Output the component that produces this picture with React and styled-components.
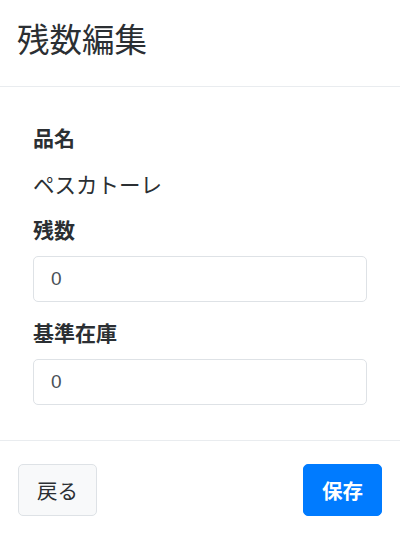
import React from 'react';
import styled, { createGlobalStyle } from 'styled-components';

const colors = {
  text: '#2b2f33',
  muted: '#495057',
  border: '#dee2e6',
  divider: '#e9ecef',
  light: '#f8f9fa',
  primary: '#007bff',
};

const GlobalStyle = createGlobalStyle`
  html, body {
    margin: 0;
    padding: 0;
    background: #fff;
  }
  body {
    font-family: "Noto Sans CJK JP", "Noto Sans", sans-serif;
    color: ${colors.text};
  }
`;

const Modal = styled.div`
  width: 400px;
  height: 536px;
  display: flex;
  flex-direction: column;
  background: #fff;
`;

const Header = styled.div`
  height: 87px;
  box-sizing: border-box;
  padding: 0 17px 12px;
  display: flex;
  align-items: center;
  border-bottom: 1px solid ${colors.divider};
`;

const Title = styled.h5`
  margin: 0;
  font-size: 32.5px;
  font-weight: 400;
  line-height: 1.2;
  color: ${colors.text};
`;

const Body = styled.div`
  padding: 35px 33px 35px;
  border-bottom: 1px solid ${colors.divider};
`;

const Group = styled.div`
  display: flex;
  flex-direction: column;
  margin-bottom: ${(p) => (p.$last ? 0 : '15px')};
`;

const Label = styled.label`
  font-size: 21px;
  font-weight: 700;
  line-height: 30px;
  margin-bottom: 12px;
  color: ${colors.text};
`;

const Value = styled.div`
  font-size: 21.5px;
  line-height: 30px;
  padding-top: 5px;
  color: ${colors.text};
`;

const Input = styled.input`
  box-sizing: border-box;
  height: 46px;
  width: 100%;
  padding: 0 17px;
  border: 1px solid ${colors.border};
  border-radius: 5px;
  font-family: "Liberation Sans", Arial, sans-serif;
  font-size: 19px;
  color: ${colors.muted};
  outline: none;
`;

const Footer = styled.div`
  flex: 1;
  padding: 23px 18px 0;
  display: flex;
  justify-content: space-between;
  align-items: flex-start;
`;

const Button = styled.button`
  width: 79px;
  height: 52px;
  border-radius: 5px;
  font-family: "Noto Sans CJK JP", sans-serif;
  font-size: 20.5px;
  cursor: pointer;
  border: 1px solid ${(p) => (p.$primary ? colors.primary : colors.border)};
  background: ${(p) => (p.$primary ? colors.primary : colors.light)};
  color: ${(p) => (p.$primary ? '#fff' : colors.text)};
  font-weight: ${(p) => (p.$primary ? 700 : 400)};
`;

export default function App() {
  return (
    <>
      <GlobalStyle />
      <Modal>
        <Header>
          <Title>残数編集</Title>
        </Header>
        <Body>
          <Group>
            <Label>品名</Label>
            <Value>ペスカトーレ</Value>
          </Group>
          <Group>
            <Label>残数</Label>
            <Input defaultValue="0" />
          </Group>
          <Group $last>
            <Label>基準在庫</Label>
            <Input defaultValue="0" />
          </Group>
        </Body>
        <Footer>
          <Button>戻る</Button>
          <Button $primary>保存</Button>
        </Footer>
      </Modal>
    </>
  );
}
